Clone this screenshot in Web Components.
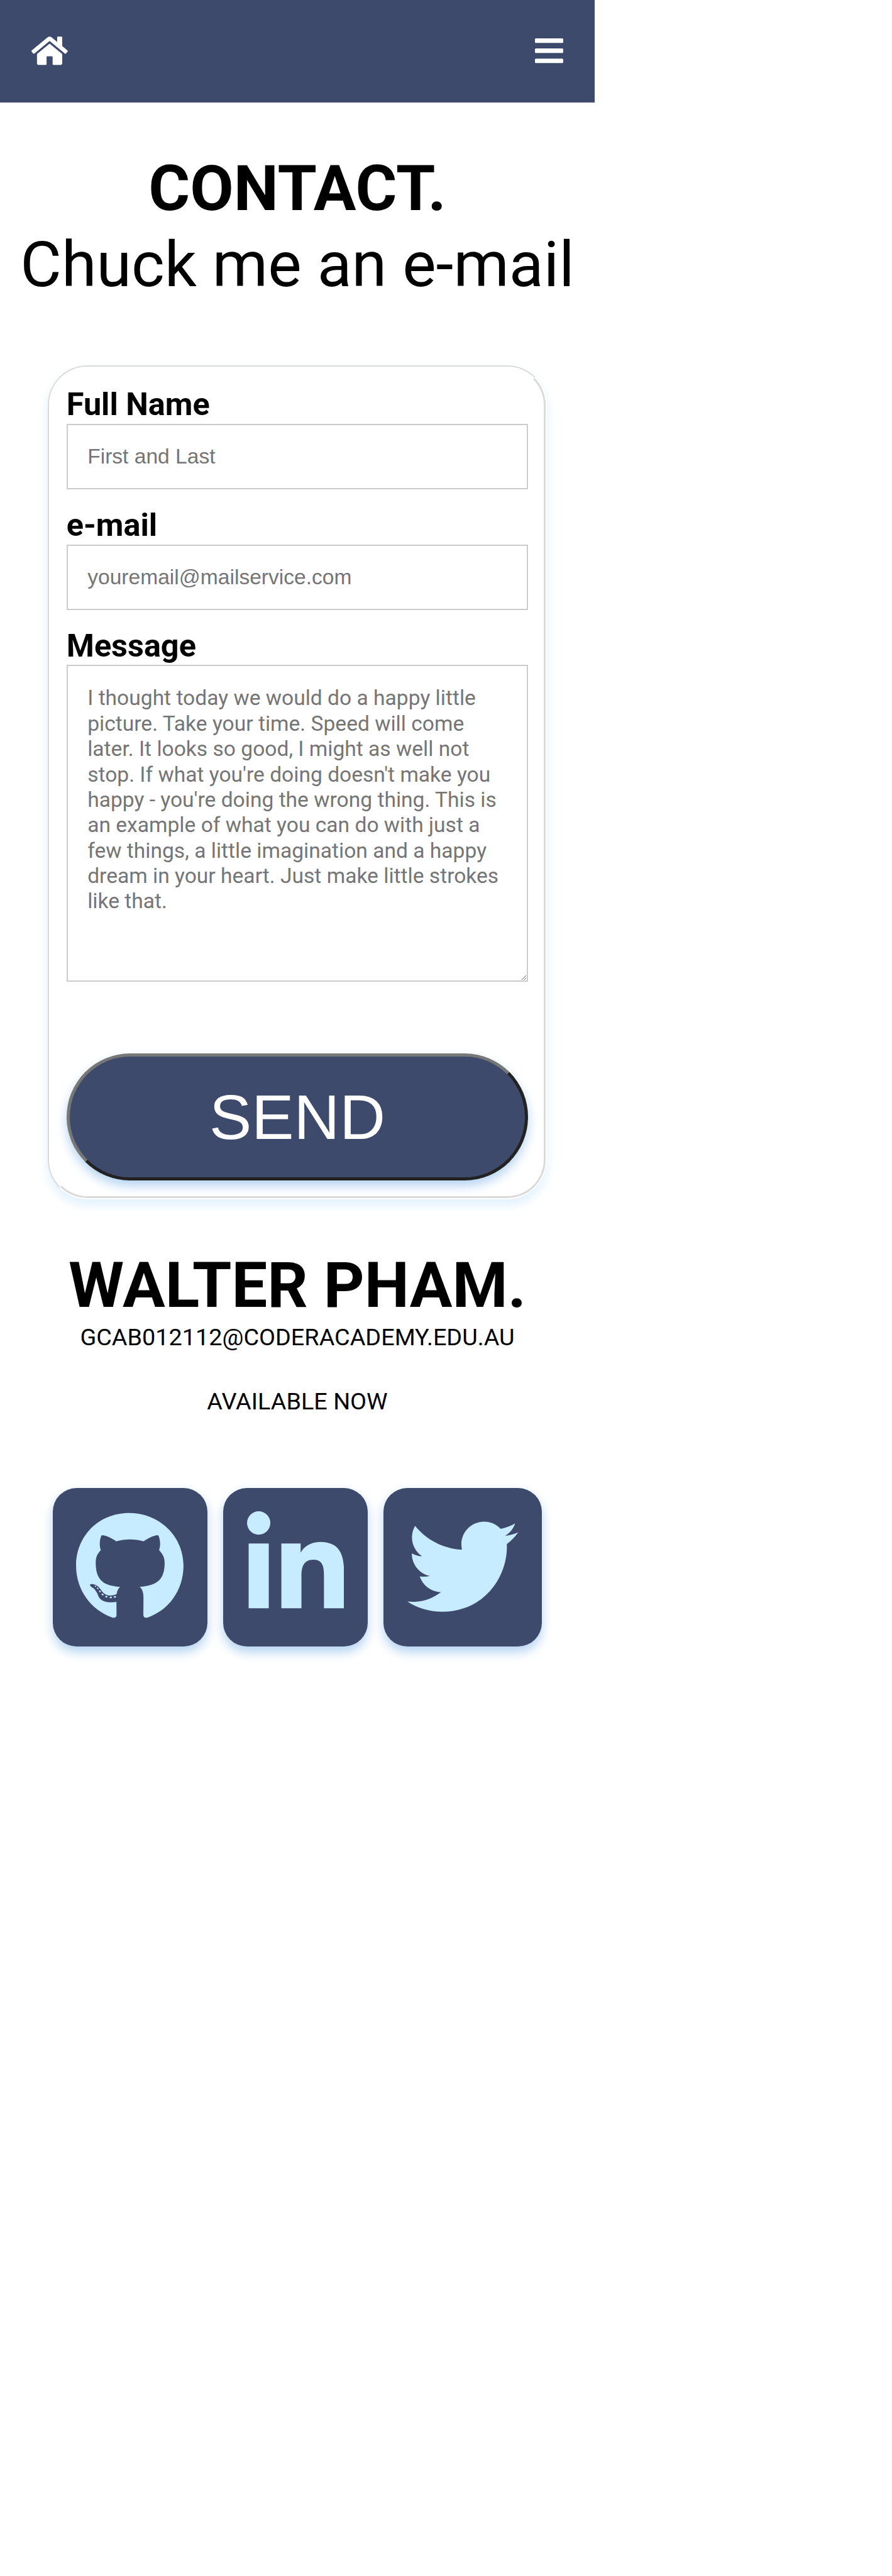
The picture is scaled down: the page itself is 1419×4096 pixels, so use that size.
<!DOCTYPE html>
<html lang="en">
<head>
<meta charset="utf-8">
<title>Contact</title>
<style>
html,body{margin:0;padding:0;background:#fff}
body{min-height:4096px;font-family:Roboto,sans-serif;line-height:1.2;color:#000}
</style>
</head>
<body>
<contact-page></contact-page>
<script>
const define = (name, html, setup) => customElements.define(name, class extends HTMLElement {
  connectedCallback() {
    if (this.shadowRoot) return;
    this.attachShadow({ mode: 'open' }).innerHTML = html;
    if (setup) setup(this, this.shadowRoot);
  }
});

const ICONS = {
  home: [576, 'M488 312.7V456c0 13.3-10.7 24-24 24H348c-6.6 0-12-5.4-12-12V356c0-6.6-5.4-12-12-12h-72c-6.6 0-12 5.4-12 12v112c0 6.6-5.4 12-12 12H112c-13.3 0-24-10.7-24-24V312.7c0-3.6 1.6-7 4.4-9.3l188-154.8c4.4-3.6 10.8-3.6 15.3 0l188 154.8c2.7 2.3 4.3 5.7 4.3 9.3zm83.6-60.9L488 182.9V44.4c0-6.6-5.4-12-12-12h-56c-6.6 0-12 5.4-12 12V117l-89.5-73.7c-17.7-14.6-43.3-14.6-61 0L4.4 251.8c-5.1 4.2-5.8 11.8-1.6 16.9l25.5 31c4.2 5.1 11.8 5.8 16.9 1.6l235.2-193.7c4.4-3.6 10.8-3.6 15.3 0l235.2 193.7c5.1 4.2 12.7 3.5 16.9-1.6l25.5-31c4.2-5.2 3.4-12.7-1.7-16.9z'],
  bars: [448, 'M16 132h416c8.837 0 16-7.163 16-16V76c0-8.837-7.163-16-16-16H16C7.163 60 0 67.163 0 76v40c0 8.837 7.163 16 16 16zm0 160h416c8.837 0 16-7.163 16-16v-40c0-8.837-7.163-16-16-16H16c-8.837 0-16 7.163-16 16v40c0 8.837 7.163 16 16 16zm0 160h416c8.837 0 16-7.163 16-16v-40c0-8.837-7.163-16-16-16H16c-8.837 0-16 7.163-16 16v40c0 8.837 7.163 16 16 16z'],
  github: [496, 'M165.9 397.4c0 2-2.3 3.6-5.2 3.6-3.3.3-5.6-1.3-5.6-3.6 0-2 2.3-3.6 5.2-3.6 3-.3 5.6 1.3 5.6 3.6zm-31.1-4.5c-.7 2 1.3 4.3 4.3 4.9 2.6 1 5.6 0 6.2-2s-1.3-4.3-4.3-5.2c-2.6-.7-5.5.3-6.2 2.3zm44.2-1.7c-2.9.7-4.9 2.6-4.6 4.9.3 2 2.9 3.3 5.9 2.6 2.9-.7 4.9-2.6 4.6-4.6-.3-1.9-3-3.2-5.9-2.9zM244.8 8C106.1 8 0 113.3 0 252c0 110.9 69.8 205.8 169.5 239.2 12.8 2.3 17.3-5.6 17.3-12.1 0-6.2-.3-40.4-.3-61.4 0 0-70 15-84.7-29.8 0 0-11.4-29.1-27.8-36.6 0 0-22.9-15.7 1.6-15.4 0 0 24.9 2 38.6 25.8 21.9 38.6 58.6 27.5 72.9 20.9 2.3-16 8.8-27.1 16-33.7-55.9-6.2-112.3-14.3-112.3-110.5 0-27.5 7.6-41.3 23.6-58.9-2.6-6.5-11.1-33.3 2.6-67.9 20.9-6.5 69 27 69 27 20-5.6 41.5-8.5 62.8-8.5s42.8 2.9 62.8 8.5c0 0 48.1-33.6 69-27 13.7 34.7 5.2 61.4 2.6 67.9 16 17.7 25.8 31.5 25.8 58.9 0 96.5-58.9 104.2-114.8 110.5 9.2 7.9 17 22.9 17 46.4 0 33.7-.3 75.4-.3 83.6 0 6.5 4.6 14.4 17.3 12.1C428.2 457.8 496 362.9 496 252 496 113.3 383.5 8 244.8 8zM97.2 352.9c-1.3 1-1 3.3.7 5.2 1.6 1.6 3.9 2.3 5.2 1 1.3-1 1-3.3-.7-5.2-1.6-1.6-3.9-2.3-5.2-1zm-10.8-8.1c-.7 1.3.3 2.9 2.3 3.9 1.6 1 3.6.7 4.3-.7.7-1.3-.3-2.9-2.3-3.9-2-.6-3.6-.3-4.3.7zm32.4 35.6c-1.6 1.3-1 4.3 1.3 6.2 2.3 2.3 5.2 2.6 6.5 1 1.3-1.3.7-4.3-1.3-6.2-2.2-2.3-5.2-2.6-6.5-1zm-11.4-14.7c-1.6 1-1.6 3.6 0 5.9 1.6 2.3 4.3 3.3 5.6 2.3 1.6-1.3 1.6-3.9 0-6.2-1.4-2.3-4-3.3-5.6-2z'],
  linkedin: [448, 'M100.28 448H7.4V148.9h92.88zM53.79 108.1C24.09 108.1 0 83.5 0 53.8a53.79 53.79 0 0 1 107.58 0c0 29.7-24.1 54.3-53.79 54.3zM447.9 448h-92.68V302.4c0-34.7-.7-79.2-48.29-79.2-48.29 0-55.69 37.7-55.69 76.7V448h-92.78V148.9h89.08v40.8h1.3c12.4-23.5 42.69-48.3 87.88-48.3 94 0 111.28 61.9 111.28 142.3V448z'],
  twitter: [512, 'M459.37 151.716c.325 4.548.325 9.097.325 13.645 0 138.72-105.583 298.558-298.558 298.558-59.452 0-114.68-17.219-161.137-47.106 8.447.974 16.568 1.299 25.34 1.299 49.055 0 94.213-16.568 130.274-44.832-46.132-.975-84.792-31.188-98.112-72.772 6.498.974 12.995 1.624 19.818 1.624 9.421 0 18.843-1.3 27.614-3.573-48.081-9.747-84.143-51.98-84.143-102.985v-1.299c13.969 7.797 30.214 12.67 47.431 13.319-28.264-18.843-46.781-51.005-46.781-87.391 0-19.492 5.197-37.36 14.294-52.954 51.655 63.675 129.3 105.258 216.365 109.807-1.624-7.797-2.599-15.918-2.599-24.04 0-57.828 46.782-104.934 104.934-104.934 30.213 0 57.502 12.67 76.67 33.137 23.715-4.548 46.456-13.32 66.599-25.34-7.798 24.366-24.366 44.833-46.132 57.827 21.117-2.273 41.584-8.122 60.426-16.243-14.292 20.791-32.161 39.308-52.628 54.253z']
};

define('ui-icon', `<style>
:host{display:block;height:1em}
svg{display:block;height:1em;width:auto;fill:currentColor}
</style><svg><path/></svg>`, (el, root) => {
  const [w, d] = ICONS[el.getAttribute('name')];
  root.querySelector('svg').setAttribute('viewBox', `0 0 ${w} 512`);
  root.querySelector('path').setAttribute('d', d);
});

define('nav-bar', `<style>
:host{display:flex;justify-content:space-between;align-items:flex-start;box-sizing:border-box;height:163px;padding:54.6px 49.9px 0 50.2px;background:#3d4a6c;color:#fff;font-size:51.4px}
</style><slot></slot>`);

define('page-title', `<style>
:host{display:block;text-align:center;font-size:100.8px;line-height:120.9px;white-space:nowrap}
h1,p{margin:0;font-size:inherit}
h1{font-weight:700}
</style><h1><slot></slot></h1><p><slot name="sub"></slot></p>`);

define('form-field', `<style>
:host{display:block}
label{display:block;font-weight:700;font-size:50.4px;line-height:60.5px}
input,textarea{display:block;box-sizing:border-box;width:100%;margin:0;border:2px solid #ccc;border-radius:0;background:#fff;outline:0;font-size:33.6px;padding:31.4px}
input{height:104px;font-family:"Liberation Sans",Arial,sans-serif}
textarea{height:504px;font-family:Roboto,sans-serif;line-height:40.35px}
::placeholder{color:#757575;opacity:1}
</style><label><slot></slot></label>`, (el, root) => {
  const f = document.createElement(el.hasAttribute('multiline') ? 'textarea' : 'input');
  f.placeholder = el.getAttribute('hint');
  root.append(f);
});

define('send-button', `<style>
:host{display:block}
button{display:block;box-sizing:border-box;width:100%;height:201.5px;padding:0;border:5px solid;border-color:#777 #222 #222 #777;border-radius:101px;background:#3d4a6c;color:#fff;font:100.8px/1.2 "Liberation Sans",Arial,sans-serif;box-shadow:0 8.4px 16.8px #b5d3f1}
</style><button><slot></slot></button>`);

/* The card edge is a groove: an outer ring and an inner ring with opposite light sides. */
define('contact-form', `<style>
:host{display:block;box-sizing:border-box;width:794.8px;height:1325.7px;border:2px solid;border-color:#dadada #fff #fff #dadada;border-radius:63px;background:#fff;box-shadow:0 8.4px 16.8px #e0f0ff}
form{display:flex;flex-direction:column;gap:27.1px;box-sizing:border-box;height:100%;padding:27px 25.2px 0;border:3px solid;border-color:#fff #dadada #dadada #fff;border-radius:61px}
send-button{margin-top:87.1px}
</style>
<form>
<form-field hint="First and Last">Full Name</form-field>
<form-field hint="youremail@mailservice.com">e-mail</form-field>
<form-field multiline hint="I thought today we would do a happy little picture. Take your time. Speed will come later. It looks so good, I might as well not stop. If what you're doing doesn't make you happy - you're doing the wrong thing. This is an example of what you can do with just a few things, a little imagination and a happy dream in your heart. Just make little strokes like that.">Message</form-field>
<send-button>SEND</send-button>
</form>`);

define('social-tile', `<style>
:host{display:block;padding:36.8px 37.8px 38.8px;border-radius:37.8px;background:#3d4a6c;color:#c7ebff;font-size:176.4px;box-shadow:0 8.4px 16.8px #b5d3f1}
</style><slot></slot>`);

define('contact-footer', `<style>
:host{display:flex;flex-direction:column;align-items:center;text-align:center;white-space:nowrap}
h2{margin:0;font-size:100.8px;line-height:120.4px;font-weight:700}
p{margin:0;font-size:37.8px;line-height:45.4px}
p+p{margin-top:56.9px}
nav{display:flex;gap:25.2px;margin-top:114.2px}
</style>
<h2>WALTER PHAM.</h2><p>GCAB012112@CODERACADEMY.EDU.AU</p><p>AVAILABLE NOW</p>
<nav>
<social-tile><ui-icon name="github"></ui-icon></social-tile>
<social-tile><ui-icon name="linkedin"></ui-icon></social-tile>
<social-tile><ui-icon name="twitter"></ui-icon></social-tile>
</nav>`);

define('contact-page', `<style>
:host{display:block;width:946px}
page-title{margin-top:76.6px}
contact-form{margin:100px 0 0 75.6px}
contact-footer{margin-top:76.6px}
</style>
<nav-bar><ui-icon name="home"></ui-icon><ui-icon name="bars"></ui-icon></nav-bar>
<page-title>CONTACT.<span slot="sub">Chuck me an e-mail</span></page-title>
<contact-form></contact-form>
<contact-footer></contact-footer>`);
</script>
</body>
</html>
